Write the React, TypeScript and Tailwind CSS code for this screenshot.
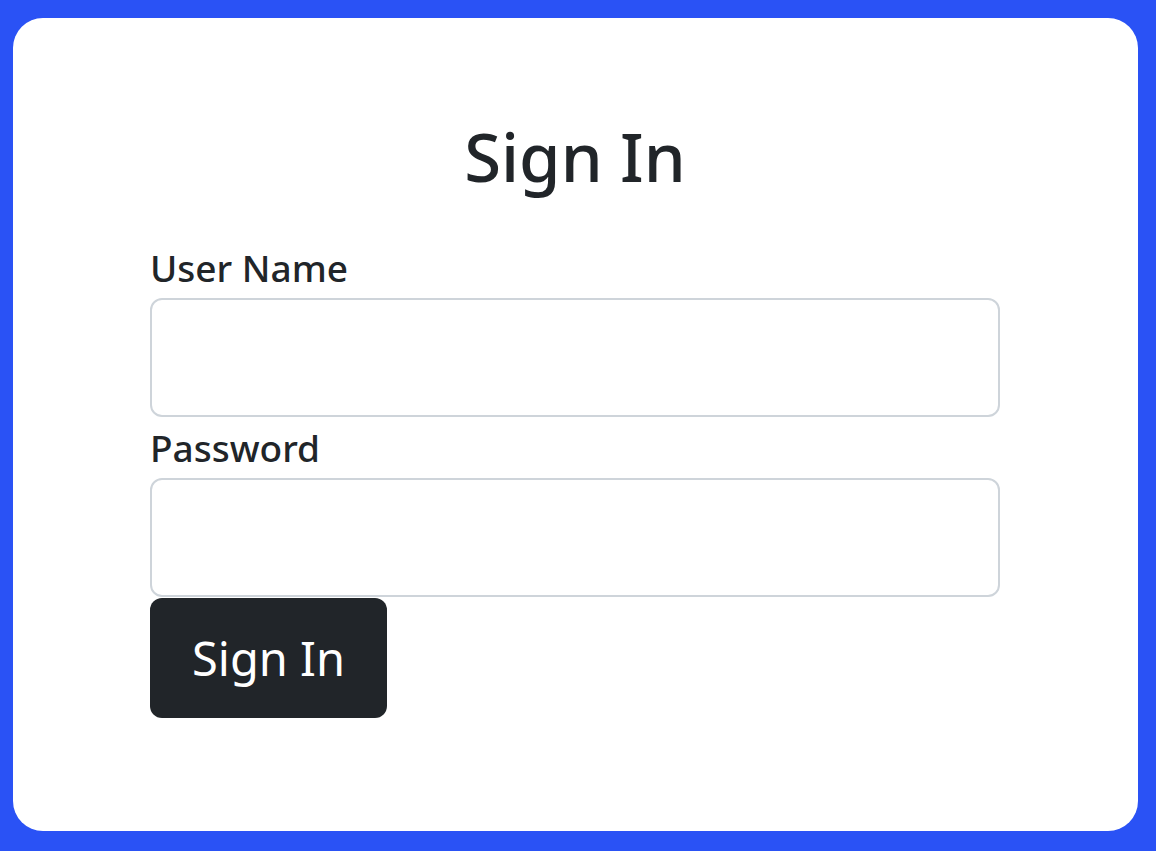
export default function App() {
  return (
    <div className="h-[851px] w-[1156px] bg-[#2a52f5] pt-[18px] pl-[13px] pr-[18px] pb-[20px] font-['Noto_Sans',sans-serif] text-[#212529]">
      <div className="flex h-full flex-col items-center rounded-[30px] bg-white pr-px">
        <form className="mt-[96px] flex w-[850px] flex-col" onSubmit={(e) => e.preventDefault()}>
          <h1 className="mb-[40px] text-center text-[67px] leading-[84px] font-medium">Sign In</h1>
          <label htmlFor="username" className="text-[37px] leading-[60px] font-medium">
            User Name
          </label>
          <input
            id="username"
            type="text"
            className="h-[119px] rounded-[12px] border-2 border-[#ced4da] bg-white px-6 text-[37px] outline-none"
          />
          <label htmlFor="password" className="text-[37px] leading-[61px] font-medium">
            Password
          </label>
          <input
            id="password"
            type="password"
            className="h-[119px] rounded-[12px] border-2 border-[#ced4da] bg-white px-6 text-[37px] outline-none"
          />
          <button
            type="submit"
            className="mt-px h-[120px] w-[237px] rounded-[12px] bg-[#212529] text-[47px] text-white"
          >
            Sign In
          </button>
        </form>
      </div>
    </div>
  );
}
